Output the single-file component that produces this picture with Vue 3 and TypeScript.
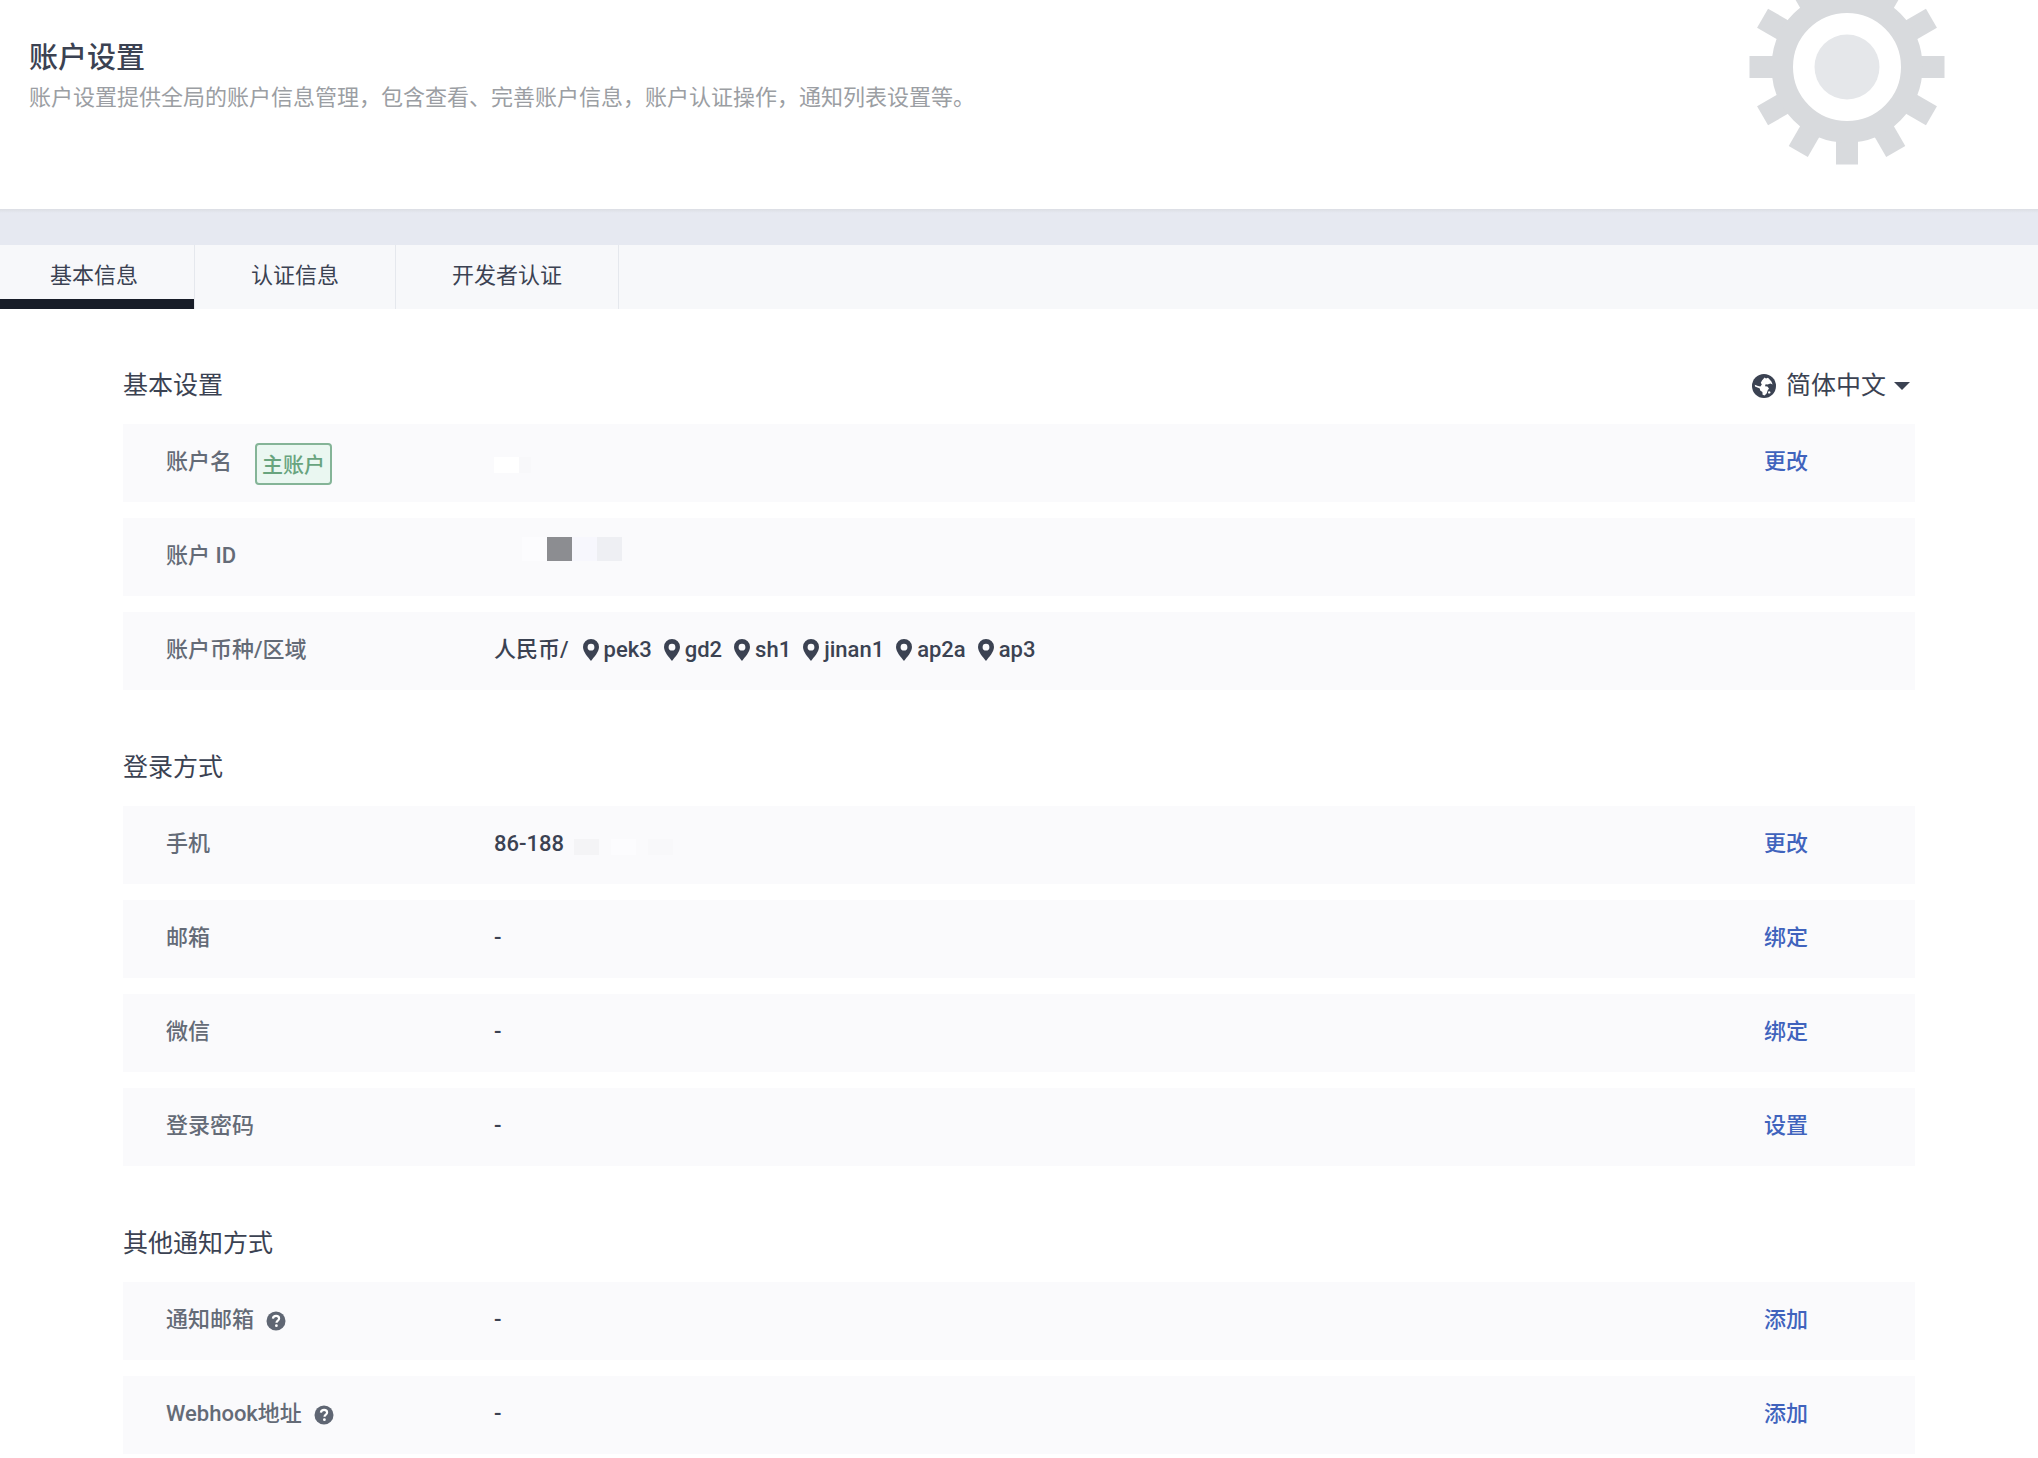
<script setup lang="ts">
import { ref } from 'vue'

interface Block {
  tone: string
}

interface Row {
  label: string
  badge?: string
  help?: boolean
  value?: string
  regions?: string[]
  mask?: { kind: string; blocks: Block[] }
  action?: string
}

interface Section {
  title: string
  language?: boolean
  rows: Row[]
}

const tabs = ['基本信息', '认证信息', '开发者认证']
const activeTab = ref(0)
const language = ref('zh')

const sections: Section[] = [
  {
    title: '基本设置',
    language: true,
    rows: [
      {
        label: '账户名',
        badge: '主账户',
        mask: { kind: 'name', blocks: [{ tone: 'white' }, { tone: 'faint' }] },
        action: '更改',
      },
      {
        label: '账户 ID',
        mask: {
          kind: 'id',
          blocks: [{ tone: 'pale' }, { tone: 'dark' }, { tone: 'tint' }, { tone: 'soft' }],
        },
      },
      {
        label: '账户币种/区域',
        value: '人民币/',
        regions: ['pek3', 'gd2', 'sh1', 'jinan1', 'ap2a', 'ap3'],
      },
    ],
  },
  {
    title: '登录方式',
    rows: [
      {
        label: '手机',
        value: '86-188',
        mask: {
          kind: 'phone',
          blocks: [{ tone: 'light' }, { tone: 'pale' }, { tone: 'faint' }],
        },
        action: '更改',
      },
      { label: '邮箱', value: '-', action: '绑定' },
      { label: '微信', value: '-', action: '绑定' },
      { label: '登录密码', value: '-', action: '设置' },
    ],
  },
  {
    title: '其他通知方式',
    rows: [
      { label: '通知邮箱', help: true, value: '-', action: '添加' },
      { label: 'Webhook地址', help: true, value: '-', action: '添加' },
    ],
  },
]

const teeth = Array.from({ length: 12 }, (_, i) => i * 30)
</script>

<template>
  <div class="page">
    <header class="banner">
      <div class="intro">
        <h1>账户设置</h1>
        <p>账户设置提供全局的账户信息管理，包含查看、完善账户信息，账户认证操作，通知列表设置等。</p>
      </div>
      <svg class="gear" viewBox="-98 -98 196 196" aria-hidden="true">
        <g fill="#d8dadd">
          <rect
            v-for="angle in teeth"
            :key="angle"
            x="-11"
            y="-97.5"
            width="22"
            height="30"
            :transform="`rotate(${angle})`"
          />
        </g>
        <circle r="64.75" fill="none" stroke="#d8dadd" stroke-width="21.5" />
        <circle r="32.5" fill="#e5e7ea" />
      </svg>
    </header>

    <nav class="tabs">
      <button
        v-for="(tab, i) in tabs"
        :key="tab"
        type="button"
        class="tab"
        :class="{ active: i === activeTab }"
        @click="activeTab = i"
      >
        {{ tab }}
      </button>
    </nav>

    <main class="content">
      <section v-for="section in sections" :key="section.title" class="section">
        <div class="heading">
          <h2>{{ section.title }}</h2>
          <div v-if="section.language" class="language">
            <svg class="globe" viewBox="0 0 24 24" aria-hidden="true">
              <circle cx="12" cy="12" r="12" fill="#3b4252" />
              <path
                fill="#fff"
                d="M12.6 3.4 14 4.6 16 3.8 19.4 7.4 20.6 10.4 18.4 9.4 15.6 10.6 13.6 10.2 13 12.2 15.4 12.6 17 14.4 15.6 16.6 14.8 19.2 12.6 21.4 10.6 20.8 10.4 18 8.2 16.4 7.8 14.4 3 12.4 2.8 10.8 6 12 8.4 12.4 9.8 10.6 8.8 8.8 10 6.6Z"
              />
              <circle cx="17.2" cy="18.4" r="1.2" fill="#fff" />
            </svg>
            <select v-model="language" aria-label="语言">
              <option value="zh">简体中文</option>
              <option value="en">English</option>
            </select>
            <svg class="caret" viewBox="0 0 16 8" aria-hidden="true">
              <path d="M0 0h16L8 8z" fill="#3b4252" />
            </svg>
          </div>
        </div>

        <dl class="rows">
          <div v-for="row in section.rows" :key="row.label" class="row">
            <dt class="label">
              {{ row.label }}
              <span v-if="row.badge" class="badge">{{ row.badge }}</span>
              <svg v-if="row.help" class="help" viewBox="0 0 20 20" aria-hidden="true">
                <circle cx="10" cy="10" r="9.5" fill="#5f6673" />
                <path
                  d="M6.9 7.6c.2-1.7 1.4-2.7 3.2-2.7s3 1 3 2.6c0 2.2-2.6 2.2-2.6 4.3"
                  fill="none"
                  stroke="#fff"
                  stroke-width="2.2"
                />
                <circle cx="10.4" cy="14.7" r="1.4" fill="#fff" />
              </svg>
            </dt>
            <dd class="value">
              <span v-if="row.value">{{ row.value }}</span>
              <span v-if="row.regions" class="regions">
                <span v-for="region in row.regions" :key="region" class="region">
                  <svg class="pin" viewBox="0 0 16 22" aria-hidden="true">
                    <path
                      fill="#3b4252"
                      fill-rule="evenodd"
                      d="M8 0a8 8 0 0 0-8 8c0 5 5 10 8 14 3-4 8-9 8-14a8 8 0 0 0-8-8zm0 4.8a3.4 3.4 0 1 1 0 6.8 3.4 3.4 0 0 1 0-6.8z"
                    />
                  </svg>
                  {{ region }}
                </span>
              </span>
              <span v-if="row.mask" class="mask" :class="row.mask.kind">
                <i v-for="(block, i) in row.mask.blocks" :key="i" :class="block.tone"></i>
              </span>
            </dd>
            <dd v-if="row.action" class="action">
              <a href="#">{{ row.action }}</a>
            </dd>
          </div>
        </dl>
      </section>
    </main>
  </div>
</template>

<style>
body {
  margin: 0;
  background: #fff;
}
</style>

<style scoped>
.page {
  font-family: Roboto, "Noto Sans CJK SC", sans-serif;
  font-size: 22px;
  line-height: 30px;
  color: #3b4252;
}

.banner {
  display: flex;
  justify-content: space-between;
  height: 209px;
  padding: 0 93px 0 29px;
  overflow: hidden;
  box-sizing: border-box;
}

.intro {
  padding-top: 39px;
}

h1,
h2,
p,
dl,
dd {
  margin: 0;
}

h1 {
  font-size: 29px;
  line-height: 38px;
  font-weight: 500;
}

p {
  margin-top: 6px;
  color: #9b9ea3;
}

.gear {
  flex: none;
  width: 196px;
  height: 196px;
  margin-top: -31px;
}

.tabs {
  position: relative;
  display: flex;
  border-top: 36px solid #e6e9f1;
  background: #f7f8fa;
}

.tabs::before {
  content: "";
  position: absolute;
  top: -36px;
  left: 0;
  right: 0;
  height: 4px;
  background: linear-gradient(#dcdee4, #e6e9f1);
}

.tab {
  height: 64px;
  padding: 0 56px 2px;
  border: 0;
  border-right: 1px solid #e5e8ed;
  background: none;
  font: inherit;
  color: inherit;
}

.tab:first-child {
  padding-left: 50px;
}

.tab.active {
  box-shadow: inset 0 -10px 0 #181d28;
}

.content {
  padding: 56px 123px 4px;
}

.section + .section {
  margin-top: 57px;
}

.heading {
  display: flex;
  justify-content: space-between;
  align-items: center;
  height: 38px;
  padding-top: 2px;
  margin-bottom: 19px;
}

h2,
select {
  font-size: 25px;
  line-height: 38px;
  font-weight: 400;
}

.language {
  display: flex;
  align-items: center;
  padding-right: 5px;
}

.globe {
  width: 24px;
  height: 24px;
  margin-right: 10px;
}

select {
  appearance: none;
  border: 0;
  padding: 0 23px 0 0;
  margin-right: -16px;
  background: none;
  font-family: inherit;
  color: inherit;
}

.caret {
  width: 16px;
  height: 8px;
  pointer-events: none;
}

.rows {
  display: grid;
  gap: 16px;
}

.row {
  display: grid;
  grid-template-columns: 328px 1fr 151px;
  align-items: center;
  height: 78px;
  padding: 0 0 2px 43px;
  box-sizing: border-box;
  background: #fafafc;
}

.label,
.value {
  display: flex;
  align-items: center;
  font-weight: 500;
}

.label {
  color: #646b77;
}

.badge {
  margin: 4px 0 0 23px;
  padding: 2px 5px 0;
  border: 2px solid #84b497;
  border-radius: 4px;
  background: #eaf7f1;
  font-size: 21px;
  line-height: 36px;
  color: #68a47e;
}

.help {
  width: 20px;
  height: 20px;
  margin: 2px 0 0 12px;
}

.regions {
  display: flex;
  gap: 12px;
  margin-left: 14px;
}

.region {
  display: flex;
  align-items: center;
  gap: 5px;
}

.pin {
  width: 16px;
  height: 22px;
}

.action a {
  font-weight: 500;
  color: #4063bd;
  text-decoration: none;
}

.mask {
  display: flex;
}

.mask i {
  width: 25px;
  height: 24px;
}

.mask.name,
.mask.phone {
  margin-top: 6px;
}

.mask.name i,
.mask.phone i {
  height: 16px;
}

.mask.name .faint {
  width: 12px;
}

.mask.id {
  margin: 0 0 14px 28px;
}

.mask.phone {
  gap: 12px;
  margin-left: 10px;
}

.white {
  background: #fff;
}

.pale {
  background: #fcfcfe;
}

.faint {
  background: #f8f8fa;
}

.light {
  background: #f4f4f6;
}

.dark {
  background: #8c8d91;
}

.tint {
  background: #f7f7fd;
}

.soft {
  background: #eeeff3;
}
</style>
